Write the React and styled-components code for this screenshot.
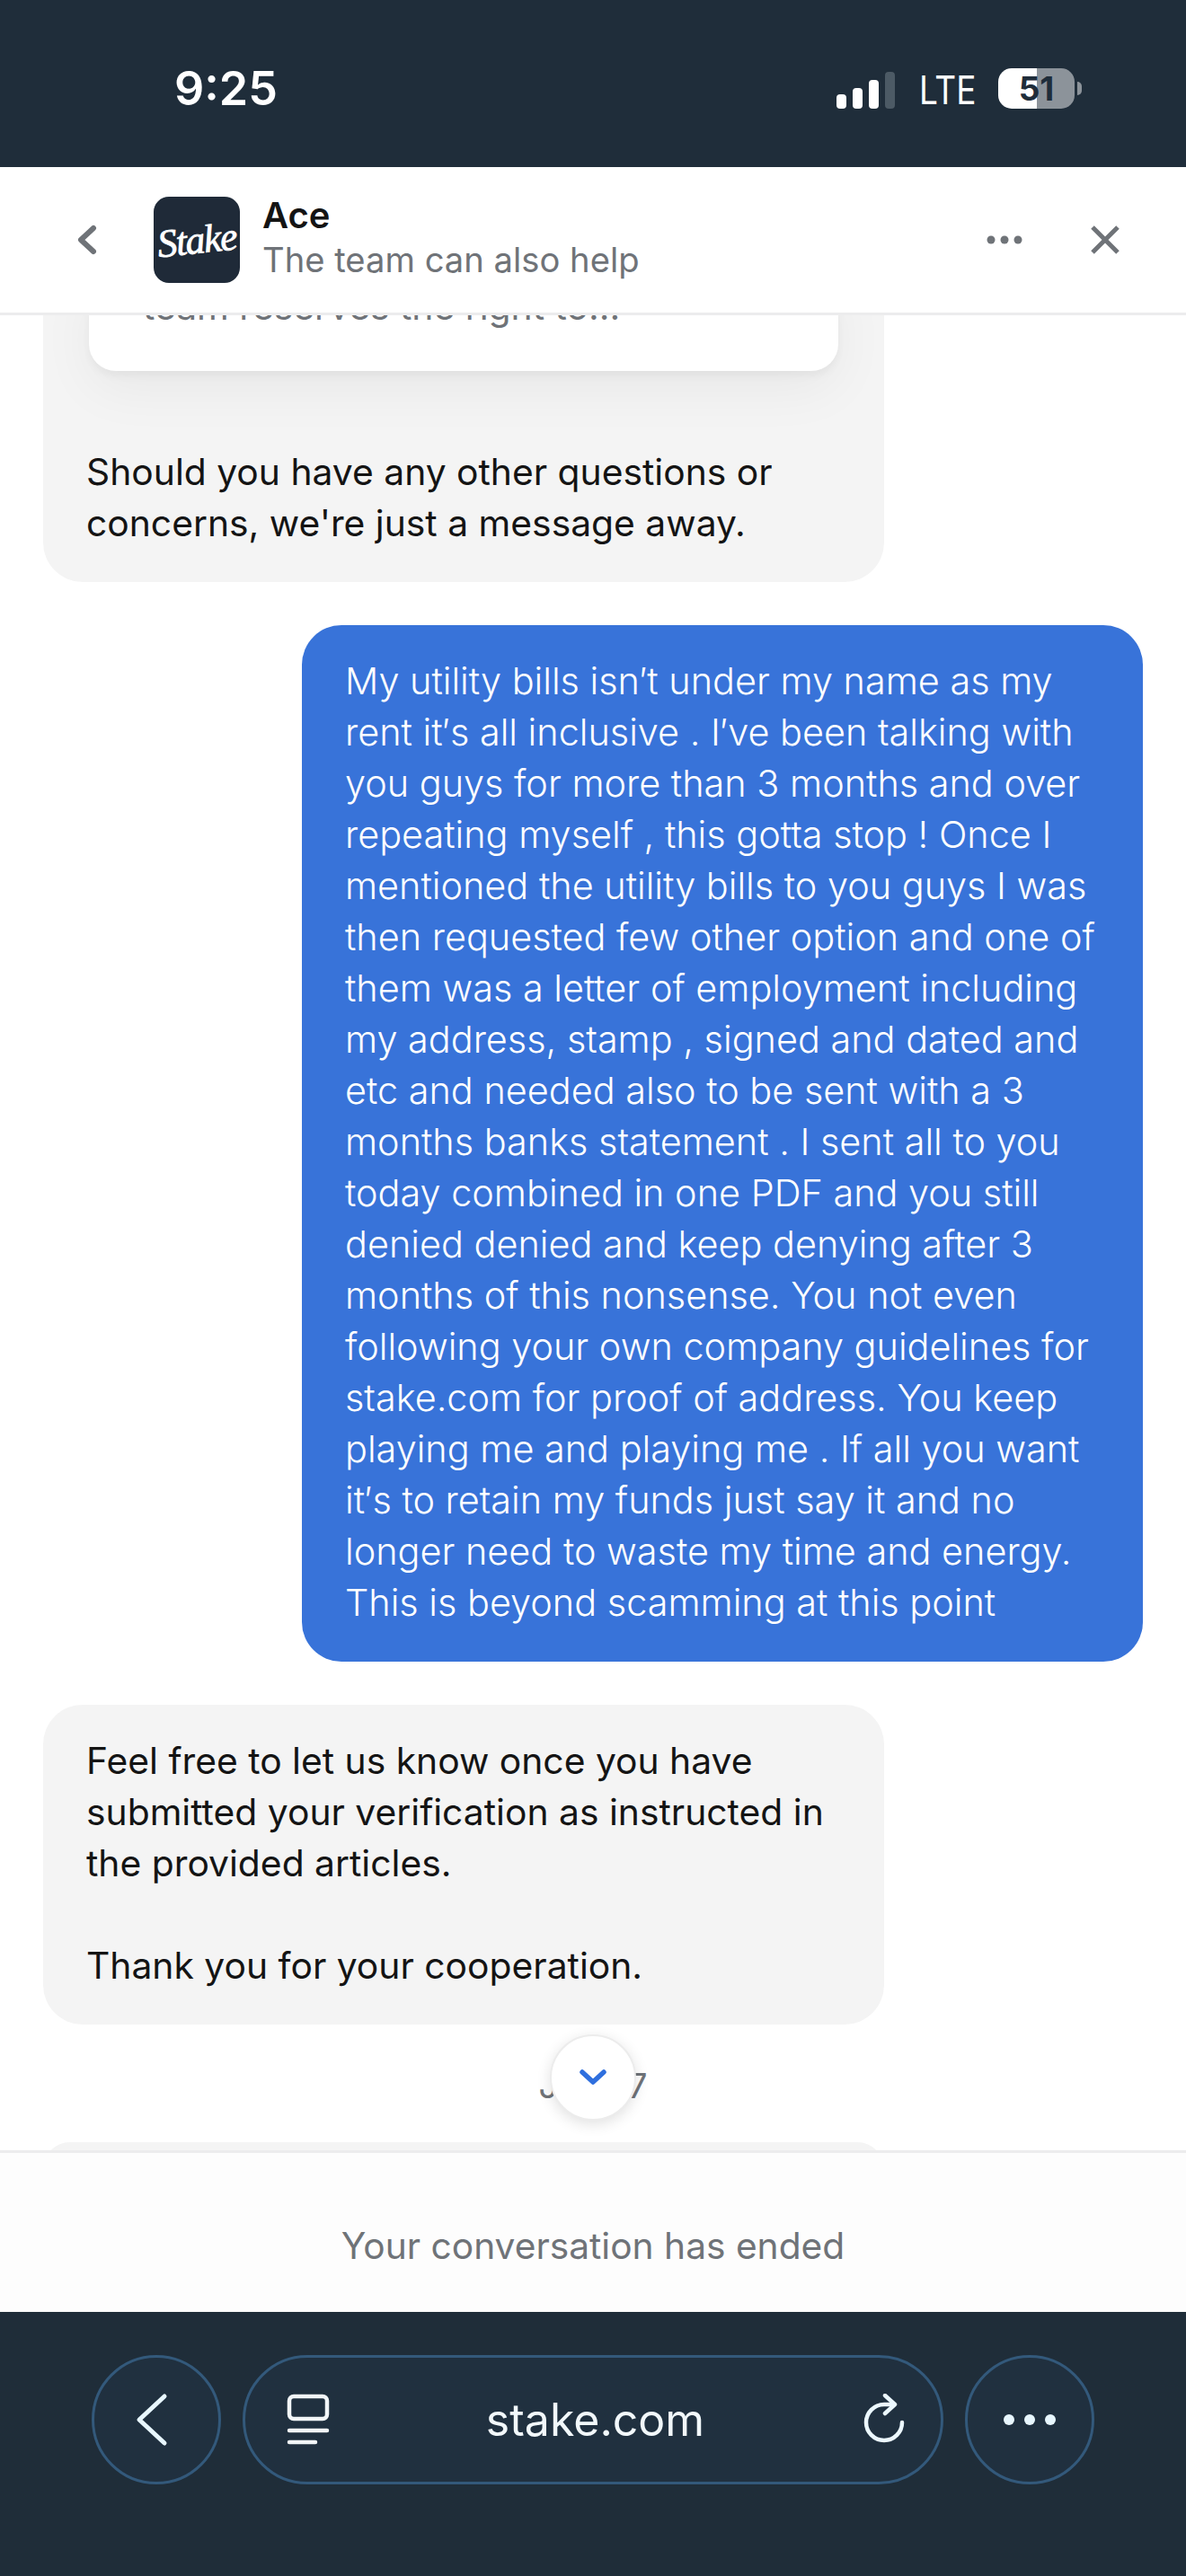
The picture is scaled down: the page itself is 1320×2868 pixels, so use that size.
import React from 'react';
import styled, { createGlobalStyle } from 'styled-components';

const GlobalStyle = createGlobalStyle`
  html, body {
    margin: 0;
    padding: 0;
    background: #fff;
    font-family: Inter, "Liberation Sans", sans-serif;
  }
  * { box-sizing: border-box; }
`;

const Page = styled.div`
  width: 1320px;
  height: 2868px;
  display: flex;
  flex-direction: column;
  overflow: hidden;
`;

const StatusBar = styled.div`
  height: 186px;
  flex: none;
  background: #1f2d3a;
  display: flex;
  align-items: center;
  justify-content: space-between;
  padding: 10px 116px 0 194px;
  color: #fff;
`;

const Time = styled.div`
  font-size: 52px;
  font-weight: 600;
`;

const StatusRight = styled.div`
  display: flex;
  align-items: center;
`;

const Signal = styled.div`
  display: flex;
  align-items: flex-end;
  gap: 7px;
  height: 41px;
  margin-top: 4px;
`;

const SignalBar = styled.span`
  width: 11px;
  height: ${p => p.$h}px;
  border-radius: 4px;
  background: ${p => (p.$off ? '#4c5a65' : '#fff')};
`;

const Lte = styled.div`
  width: 61px;
  margin: 4px 27px 0 27px;
  font-size: 44px;
  font-weight: 400;
  line-height: 1;
  transform: scaleX(0.84);
  transform-origin: left center;
  white-space: nowrap;
`;

const Battery = styled.div`
  width: 85px;
  height: 45px;
  border-radius: 15px;
  background: linear-gradient(90deg, #fff 0 51%, #8c939a 51% 100%);
  color: #1f2d3a;
  font-size: 37px;
  font-weight: 700;
  line-height: 45px;
  text-align: center;
`;

const BatteryNub = styled.span`
  width: 5px;
  height: 15px;
  margin-left: 3px;
  border-radius: 0 8px 8px 0;
  background: #8c939a;
`;

const Header = styled.div`
  height: 165px;
  flex: none;
  background: #fff;
  border-bottom: 3px solid #ececed;
  display: flex;
  align-items: center;
  padding: 0 74px 0 84px;
`;

const IconButton = styled.div`
  display: flex;
  align-items: center;
  justify-content: center;
  flex: none;
`;

const Avatar = styled.div`
  width: 96px;
  height: 96px;
  flex: none;
  margin-left: 63px;
  border-radius: 17px;
  background: #1f2a38;
  color: #fff;
  display: flex;
  align-items: center;
  justify-content: center;
  overflow: hidden;
`;

const LogoText = styled.span`
  font-family: "Liberation Serif", serif;
  font-style: italic;
  font-weight: 400;
  font-size: 44px;
  letter-spacing: -1.5px;
  -webkit-text-stroke: 0.8px #fff;
  transform: rotate(-6deg);
`;

const HeaderText = styled.div`
  flex: 1;
  margin-left: 25px;
  display: flex;
  flex-direction: column;
`;

const AgentName = styled.div`
  font-size: 40px;
  font-weight: 600;
  line-height: 48px;
  margin-top: -4px;
  color: #141414;
`;

const AgentSub = styled.div`
  font-size: 38.2px;
  line-height: 50px;
  color: #6f7378;
`;

const HeaderActions = styled.div`
  display: flex;
  align-items: center;
  gap: 76px;
`;

const Chat = styled.div`
  height: 2043px;
  flex: none;
  position: relative;
  overflow: hidden;
  background: #fff;
`;

const Thread = styled.div`
  display: flex;
  flex-direction: column;
  margin-top: -74px;
  padding: 0 48px;
`;

const Bubble = styled.div`
  width: 936px;
  padding: 34px 48px 37px;
  border-radius: 44px;
  font-size: ${p => (p.$mine ? '41.4px' : '40.8px')};
  line-height: 57px;
  align-self: ${p => (p.$mine ? 'flex-end' : 'flex-start')};
  background: ${p => (p.$mine ? '#3873d9' : '#f4f4f4')};
  color: ${p => (p.$mine ? '#fff' : '#141414')};
  font-weight: ${p => (p.$mine ? 350 : 400)};
  margin-bottom: 48px;
`;

const Line = styled.span`
  display: block;
  white-space: nowrap;
  min-height: 57px;
`;

const Card = styled.div`
  margin: 0 0 84px 3px;
  width: 834px;
  padding: 5px 60px 47px;
  border-radius: 0 0 30px 30px;
  background: #fff;
  box-shadow: 0 6px 8px rgba(0, 0, 0, 0.04), 0 20px 60px rgba(0, 0, 0, 0.05);
  color: #6f7378;
  font-size: 40.8px;
  line-height: 50px;
  white-space: nowrap;
`;

const DateLabel = styled.div`
  margin-top: -25px;
  height: 108px;
  font-size: 38px;
  line-height: 90px;
  text-align: center;
  color: #6f7378;
`;

const NextBubble = styled.div`
  width: 936px;
  height: 60px;
  border-radius: 44px;
  background: #f4f4f4;
`;

const ScrollButton = styled.div`
  position: absolute;
  left: 612px;
  bottom: 33px;
  width: 96px;
  height: 96px;
  border-radius: 50%;
  background: #fff;
  border: 2px solid #ececec;
  box-shadow: 0 4px 16px rgba(0, 0, 0, 0.12);
  display: flex;
  align-items: center;
  justify-content: center;
`;

const Footer = styled.div`
  height: 180px;
  flex: none;
  border-top: 3px solid #ececed;
  background: #fdfdfd;
  display: flex;
  align-items: center;
  justify-content: center;
  padding-top: 30px;
  font-size: 40.7px;
  color: #6f7378;
`;

const BrowserBar = styled.div`
  height: 294px;
  flex: none;
  background: #1f2d39;
  display: flex;
  align-items: flex-start;
  gap: 24px;
  padding: 48px 102px 0;
`;

const RoundButton = styled.div`
  width: 144px;
  height: 144px;
  flex: none;
  border-radius: 50%;
  background: #20303f;
  border: 3px solid #33597b;
  display: flex;
  align-items: center;
  justify-content: center;
`;

const UrlPill = styled.div`
  flex: 1;
  height: 144px;
  border-radius: 72px;
  background: #20303f;
  border: 3px solid #33597b;
  display: flex;
  align-items: center;
  justify-content: space-between;
  padding: 0 38px 0 46px;
`;

const Url = styled.div`
  font-size: 50px;
  color: #f2f8fb;
  margin-right: 3px;
`;

const firstLines = [
  'Should you have any other questions or',
  "concerns, we're just a message away.",
];

const myLines = [
  'My utility bills isn′t under my name as my',
  'rent it′s all inclusive . I′ve been talking with',
  'you guys for more than 3 months and over',
  'repeating myself , this gotta stop ! Once I',
  'mentioned the utility bills to you guys I was',
  'then requested few other option and one of',
  'them was a letter of employment including',
  'my address, stamp , signed and dated and',
  'etc and needed also to be sent with a 3',
  'months banks statement . I sent all to you',
  'today combined in one PDF and you still',
  'denied denied and keep denying after 3',
  'months of this nonsense. You not even',
  'following your own company guidelines for',
  'stake.com for proof of address. You keep',
  'playing me and playing me . If all you want',
  'it′s to retain my funds just say it and no',
  'longer need to waste my time and energy.',
  'This is beyond scamming at this point',
];

const lastLines = [
  'Feel free to let us know once you have',
  'submitted your verification as instructed in',
  'the provided articles.',
  '',
  'Thank you for your cooperation.',
];

const renderLines = lines => lines.map((text, i) => <Line key={i}>{text}</Line>);

const App = () => (
  <Page>
    <GlobalStyle />
    <StatusBar>
      <Time>9:25</Time>
      <StatusRight>
        <Signal>
          <SignalBar $h={16} />
          <SignalBar $h={23} />
          <SignalBar $h={32} />
          <SignalBar $h={41} $off />
        </Signal>
        <Lte>LTE</Lte>
        <Battery>51</Battery>
        <BatteryNub />
      </StatusRight>
    </StatusBar>

    <Header>
      <IconButton>
        <svg width="24" height="34" viewBox="0 0 24 34" fill="none">
          <path d="M20 4 6 17l14 13" stroke="#6f7378" strokeWidth="6" strokeLinecap="round" strokeLinejoin="round" />
        </svg>
      </IconButton>
      <Avatar>
        <LogoText>Stake</LogoText>
      </Avatar>
      <HeaderText>
        <AgentName>Ace</AgentName>
        <AgentSub>The team can also help</AgentSub>
      </HeaderText>
      <HeaderActions>
        <IconButton>
          <svg width="40" height="10" viewBox="0 0 40 10" fill="#6f7378">
            <circle cx="5" cy="5" r="4.5" />
            <circle cx="20" cy="5" r="4.5" />
            <circle cx="35" cy="5" r="4.5" />
          </svg>
        </IconButton>
        <IconButton>
          <svg width="32" height="32" viewBox="0 0 32 32" fill="none">
            <path d="M2 2l28 28M30 2 2 30" stroke="#6f7378" strokeWidth="5" />
          </svg>
        </IconButton>
      </HeaderActions>
    </Header>

    <Chat>
      <Thread>
        <Bubble>
          <Card>team reserves the right to...</Card>
          {renderLines(firstLines)}
        </Bubble>
        <Bubble $mine>{renderLines(myLines)}</Bubble>
        <Bubble>{renderLines(lastLines)}</Bubble>
        <DateLabel>June 7</DateLabel>
        <NextBubble />
      </Thread>
      <ScrollButton>
        <svg width="30" height="18" viewBox="0 0 30 18" fill="none">
          <path d="M3 3l12 11L27 3" stroke="#2f6fde" strokeWidth="5.5" strokeLinecap="round" strokeLinejoin="round" />
        </svg>
      </ScrollButton>
    </Chat>

    <Footer>Your conversation has ended</Footer>

    <BrowserBar>
      <RoundButton>
        <svg width="36" height="60" viewBox="0 0 36 60" fill="none" style={{ marginRight: 10 }}>
          <path d="M32 4 4 30l28 26" stroke="#e8f7ff" strokeWidth="5" strokeLinecap="round" strokeLinejoin="round" />
        </svg>
      </RoundButton>
      <UrlPill>
        <svg width="48" height="58" viewBox="0 0 48 58" fill="none" stroke="#f2f6f8" strokeLinecap="round">
          <rect x="3" y="3" width="42" height="25" rx="5" strokeWidth="4.5" />
          <path d="M3 41h42M3 54h29" strokeWidth="4.5" />
        </svg>
        <Url>stake.com</Url>
        <svg width="48" height="58" viewBox="0 0 48 58" fill="none" stroke="#ecf8ff" strokeWidth="4.5" strokeLinecap="round" strokeLinejoin="round">
          <path d="M43 32a20 20 0 1 1-20-20h11" />
          <path d="M24 2l11 10-11 10" />
        </svg>
      </UrlPill>
      <RoundButton>
        <svg width="60" height="12" viewBox="0 0 60 12" fill="#e8f7ff">
          <circle cx="7" cy="6" r="6" />
          <circle cx="30" cy="6" r="6" />
          <circle cx="53" cy="6" r="6" />
        </svg>
      </RoundButton>
    </BrowserBar>
  </Page>
);

export default App;
